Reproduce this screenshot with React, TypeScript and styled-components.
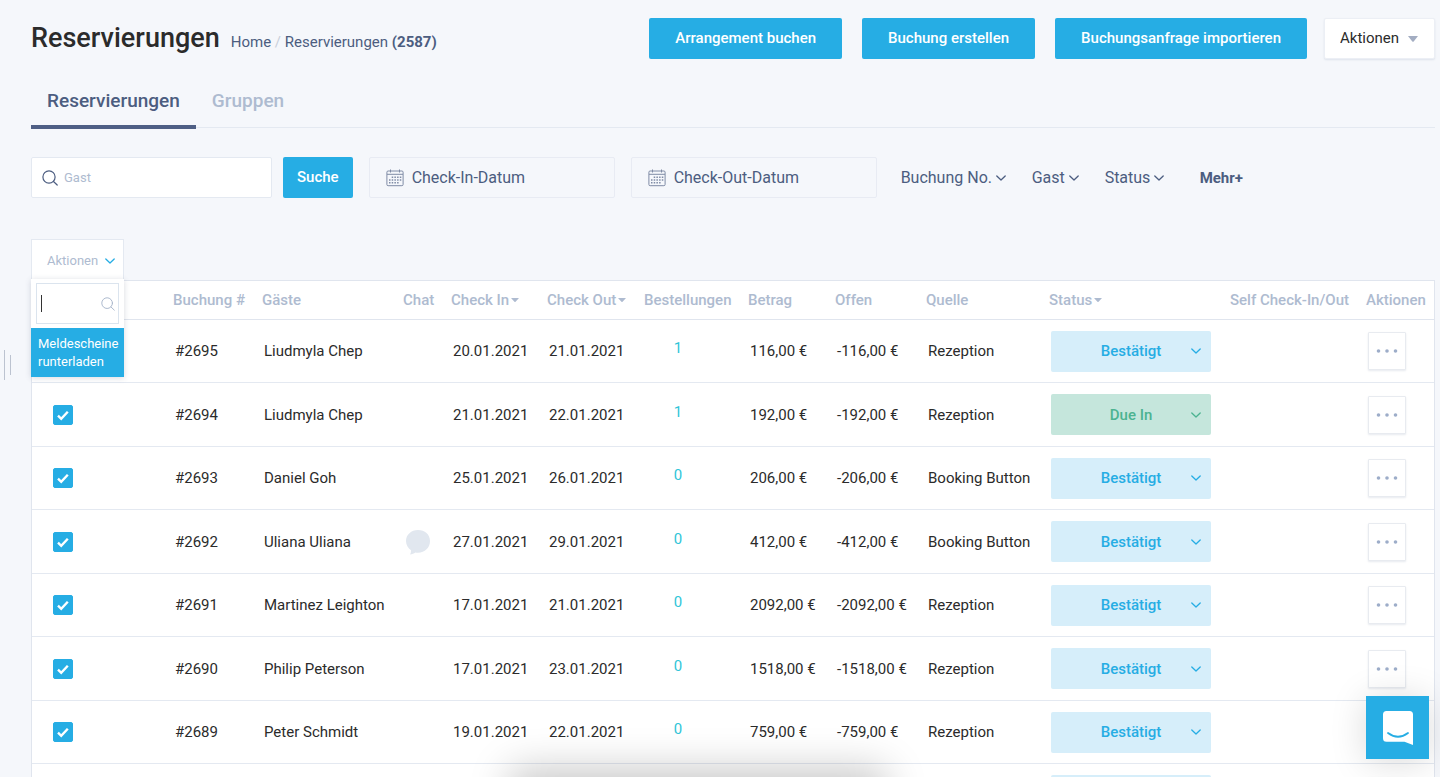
import React from 'react';
import styled, { createGlobalStyle, css } from 'styled-components';

const c = {
  bg: '#f5f7fb',
  blue: '#26ade4',
  navy: '#4c5d80',
  muted: '#aebbd0',
  line: '#e4e9f1',
  text: '#2b2b2b',
};

const GlobalStyle = createGlobalStyle`
  *, *::before, *::after { box-sizing: border-box; }
  body {
    margin: 0;
    background: ${c.bg};
    color: ${c.text};
    font-family: Roboto, "Liberation Sans", sans-serif;
    font-size: 15px;
    line-height: 20px;
  }
  button, input, select { font: inherit; color: inherit; letter-spacing: inherit; }
  svg { display: block; flex: none; }
`;

const Page = styled.div`
  height: 100vh;
  overflow: hidden;
  padding: 18px 5px 0 31px;
`;

const Header = styled.header`
  display: flex;
  align-items: flex-start;
  justify-content: space-between;
`;

const Heading = styled.div`
  display: flex;
  align-items: baseline;
  gap: 11px;
  padding-top: 2px;
`;

const Title = styled.h1`
  margin: 0;
  font-size: 27px;
  line-height: 36px;
  font-weight: 500;
`;

const Crumbs = styled.nav`
  color: ${c.navy};
  a { color: inherit; text-decoration: none; }
  span { color: #c9cfda; }
`;

const HeaderActions = styled.div`
  display: flex;
  gap: 20px;
`;

const PrimaryButton = styled.button<{ $pad?: number }>`
  height: 41px;
  padding: 0 ${(p) => p.$pad ?? 26}px 1px;
  border: 0;
  border-radius: 2px;
  background: ${c.blue};
  color: #fff;
  font-weight: 500;
  white-space: nowrap;
`;

const SelectWrap = styled.label`
  position: relative;
  display: inline-flex;
  align-items: center;
  svg {
    position: absolute;
    right: 0;
    pointer-events: none;
  }
`;

const BareSelect = styled.select`
  appearance: none;
  border: 0;
  margin: 0;
  padding: 0 13px 0 0;
  background: transparent;
  outline: none;
`;

const HeaderSelect = styled(SelectWrap)`
  margin-left: -3px;
  svg { right: 17px; color: #a3adc2; }
`;

const HeaderSelectField = styled(BareSelect)`
  height: 41px;
  width: 111px;
  padding: 0 16px 1px 15px;
  border: 1px solid #eceff5;
  border-radius: 2px;
  background: #fff;
  box-shadow: 0 1px 2px rgba(60, 80, 120, 0.12);
`;

const Tabs = styled.nav`
  display: flex;
  height: 51px;
  margin-top: 18px;
  border-bottom: 1px solid ${c.line};
`;

const Tab = styled.a<{ $active?: boolean }>`
  height: 52px;
  padding: 12px 16px 0;
  font-size: 19px;
  line-height: 24px;
  font-weight: 500;
  text-decoration: none;
  color: ${(p) => (p.$active ? c.navy : c.muted)};
  ${(p) => p.$active && css`border-bottom: 4px solid #4f5f85;`}
`;

const Filters = styled.form`
  display: flex;
  align-items: center;
  margin-top: 29px;
  color: ${c.navy};
  font-size: 16px;
`;

const SearchBox = styled.label`
  display: flex;
  align-items: center;
  gap: 6px;
  width: 241px;
  height: 41px;
  padding: 0 10px;
  border: 1px solid ${c.line};
  border-radius: 2px;
  background: #fff;
  input {
    flex: 1;
    min-width: 0;
    border: 0;
    padding: 0;
    outline: none;
    background: transparent;
    font-size: 13px;
  }
  input::placeholder { color: ${c.muted}; opacity: 1; }
`;

const SearchButton = styled(PrimaryButton)`
  margin-left: 11px;
  font-size: 15px;
`;

const DateBox = styled.label`
  display: flex;
  align-items: center;
  gap: 8px;
  width: 246px;
  height: 41px;
  margin-left: 16px;
  padding: 1px 16px 0;
  border: 1px solid #e8ebf3;
  border-radius: 2px;
  input {
    flex: 1;
    min-width: 0;
    border: 0;
    padding: 0;
    outline: none;
    background: transparent;
  }
  input::placeholder { color: ${c.navy}; opacity: 1; }
`;

const FilterMenus = styled.div`
  display: flex;
  gap: 26px;
  margin-left: 24px;
  height: 22px;
`;

const MoreButton = styled.button`
  margin-left: 10px;
  padding: 0;
  border: 0;
  background: transparent;
  font-size: 15px;
  font-weight: 700;
`;

const BulkActions = styled.div`
  position: relative;
  width: 93px;
  margin-top: 41px;
  font-size: 13px;
`;

const BulkTrigger = styled.button`
  display: flex;
  align-items: center;
  justify-content: space-between;
  width: 100%;
  height: 42px;
  padding: 1px 8px 0 15px;
  border: 1px solid ${c.line};
  border-bottom: 0;
  background: #fff;
  color: ${c.muted};
  svg { color: ${c.blue}; }
`;

const BulkMenu = styled.div`
  position: absolute;
  z-index: 2;
  top: 40px;
  left: 0;
  width: 100%;
  padding-top: 4px;
  background: #fff;
  box-shadow: 0 1px 6px rgba(60, 70, 100, 0.2);
`;

const MenuSearch = styled.label`
  position: relative;
  display: flex;
  align-items: center;
  height: 41px;
  margin: 0 5px 4px;
  padding: 0 3px 0 4px;
  border: 1px solid #dbe4ee;
  color: #a9b6cb;
  input {
    flex: 1;
    min-width: 0;
    border: 0;
    padding: 0;
    outline: none;
    background: transparent;
  }
`;

const TextCursor = styled.i`
  width: 1px;
  height: 17px;
  background: #333;
`;

const MenuOption = styled.button`
  display: block;
  width: 100%;
  height: 49px;
  padding: 0 0 0 7px;
  border: 0;
  background: ${c.blue};
  color: #fff;
  line-height: 18px;
  text-align: left;
`;

const TableFrame = styled.main`
  margin-top: -1px;
  border: 1px solid #e0e5ee;
  background: #fff;
`;

const Table = styled.table`
  width: 100%;
  table-layout: fixed;
  border-collapse: separate;
  border-spacing: 0;
  white-space: nowrap;
`;

const HeadCell = styled.th`
  height: 39px;
  padding: 0;
  border-bottom: 1px solid #e0e5ee;
  color: ${c.muted};
  font-weight: 500;
  text-align: left;
`;

const SortButton = styled.button`
  display: inline-flex;
  align-items: center;
  gap: 2px;
  padding: 0;
  border: 0;
  background: transparent;
  font-weight: 500;
`;

const Row = styled.tr`
  height: 63px;
  &:nth-child(even) { height: 64px; }
`;

const Cell = styled.td`
  padding: 0 0 0 2px;
  border-bottom: 1px solid ${c.line};
`;

const CheckLabel = styled.label`
  position: relative;
  display: block;
  width: 20px;
  height: 20px;
  margin-left: 19px;
  input {
    appearance: none;
    display: block;
    width: 20px;
    height: 20px;
    margin: 0;
    border: 1px solid #cfd8e6;
    border-radius: 2px;
  }
  input:checked {
    border-color: ${c.blue};
    background: ${c.blue};
  }
  svg {
    position: absolute;
    top: 0;
    left: 0;
    pointer-events: none;
  }
`;

const OrdersLink = styled.a`
  display: block;
  width: 64px;
  padding-bottom: 6px;
  color: #2fc5d8;
  text-align: center;
  text-decoration: none;
`;

const StatusWrap = styled(SelectWrap)<{ $green: boolean }>`
  display: flex;
  width: 160px;
  height: 41px;
  border-radius: 2px;
  background: ${(p) => (p.$green ? '#c5e6dc' : '#d6eefa')};
  color: ${(p) => (p.$green ? '#4cb391' : c.blue)};
  svg { right: 10px; }
`;

const StatusSelect = styled(BareSelect)`
  width: 100%;
  height: 41px;
  padding: 0;
  font-weight: 500;
  text-align: center;
  text-align-last: center;
`;

const MoreActions = styled.button`
  display: flex;
  align-items: center;
  justify-content: center;
  width: 38px;
  height: 38px;
  padding: 0;
  border: 1px solid #e8ebf0;
  border-radius: 1px;
  background: #fff;
  color: #9dadc9;
  box-shadow: 0 1px 2px rgba(60, 80, 120, 0.12);
`;

const PanelHandle = styled.div`
  position: fixed;
  top: 350px;
  left: 4px;
  display: flex;
  align-items: center;
  gap: 5px;
  i { width: 1px; height: 30px; background: #bcc3d0; }
  i + i { height: 20px; }
`;

const ChatLauncher = styled.button`
  position: fixed;
  right: 11px;
  bottom: 18px;
  display: flex;
  align-items: center;
  justify-content: center;
  width: 63px;
  height: 63px;
  padding: 0;
  border: 0;
  background: ${c.blue};
  box-shadow: 0 3px 36px rgba(0, 0, 0, 0.15);
`;

const BottomShade = styled.div`
  position: fixed;
  top: 100%;
  left: 36%;
  width: 25%;
  height: 60px;
  box-shadow: 0 0 40px 8px rgba(0, 0, 0, 0.22);
  pointer-events: none;
`;

const Chevron = ({ size = 10 }: { size?: number }) => (
  <svg width={size} height={size} viewBox="0 0 10 10" fill="none" stroke="currentColor" strokeWidth="1.3" strokeLinecap="round" strokeLinejoin="round">
    <path d="M0.8 3 5 7l4.2-4" />
  </svg>
);

const Caret = ({ w, h }: { w: number; h: number }) => (
  <svg width={w} height={h} viewBox="0 0 10 6" preserveAspectRatio="none" fill="currentColor">
    <path d="M0 0h10L5.700 5.500q-.7.700-1.400 0z" />
  </svg>
);

const Magnifier = ({ size, stroke }: { size: number; stroke: number }) => (
  <svg width={size} height={size} viewBox="0 0 16 16" fill="none" stroke="currentColor" strokeWidth={stroke} strokeLinecap="round">
    <circle cx="7" cy="7" r="6.100" />
    <path d="m11.500 11.500 3.700 3.500" />
  </svg>
);

const Calendar = () => (
  <svg width="18" height="18" viewBox="0 0 18 18" fill="none" stroke="#7f8ba5" strokeWidth="1">
    <rect x=".9" y="2" width="16.200" height="14.700" rx="1.200" />
    <path d="M1 5.300h16M4.500.500v3M13.500.500v3" />
    <path strokeWidth="1.500" strokeDasharray="1.500 1.200" d="M5.700 8.200h9.600M3 11h12.300M3 13.800h9.600" />
  </svg>
);

const Bubble = () => (
  <svg width="26" height="26" viewBox="0 0 26 26" fill="#e1e7ef">
    <path d="M13 1C6.200 1 1 5.700 1 12c0 4 2 7.200 5 9.200.1 1.500-.2 3-.9 4.300 2-.2 3.800-1 5.300-2 .9.200 1.700.2 2.600.2 6.800 0 12-5 12-11.700S19.800 1 13 1z" />
  </svg>
);

const Tick = () => (
  <svg width="20" height="20" viewBox="0 0 20 20" fill="none" stroke="#fff" strokeWidth="2.400">
    <path d="m5 10.700 3.200 3.100L14.800 6.800" />
  </svg>
);

const Dots = () => (
  <svg width="22" height="4" viewBox="0 0 22 4" fill="currentColor">
    <circle cx="2.500" cy="2" r="1.800" />
    <circle cx="11" cy="2" r="1.800" />
    <circle cx="19.500" cy="2" r="1.800" />
  </svg>
);

const LauncherIcon = () => (
  <svg width="30" height="34" viewBox="0 0 30 34">
    <path fill="#fff" d="M3.500 0h23A3.500 3.500 0 0 1 30 3.500V34l-8.500-3.300h-18A3.500 3.500 0 0 1 0 27.200V3.500A3.500 3.500 0 0 1 3.500 0z" />
    <path fill="none" stroke={c.blue} strokeWidth="1.800" strokeLinecap="round" d="M5 22q10 7.500 20 0" />
  </svg>
);

type Booking = {
  id: string;
  guest: string;
  chat?: boolean;
  from: string;
  to: string;
  orders: string;
  total: string;
  open: string;
  source: string;
  status: string;
};

const bookings: Booking[] = [
  { id: '#2695', guest: 'Liudmyla Chep', from: '20.01.2021', to: '21.01.2021', orders: '1', total: '116,00 €', open: '-116,00 €', source: 'Rezeption', status: 'Bestätigt' },
  { id: '#2694', guest: 'Liudmyla Chep', from: '21.01.2021', to: '22.01.2021', orders: '1', total: '192,00 €', open: '-192,00 €', source: 'Rezeption', status: 'Due In' },
  { id: '#2693', guest: 'Daniel Goh', from: '25.01.2021', to: '26.01.2021', orders: '0', total: '206,00 €', open: '-206,00 €', source: 'Booking Button', status: 'Bestätigt' },
  { id: '#2692', guest: 'Uliana Uliana', chat: true, from: '27.01.2021', to: '29.01.2021', orders: '0', total: '412,00 €', open: '-412,00 €', source: 'Booking Button', status: 'Bestätigt' },
  { id: '#2691', guest: 'Martinez Leighton', from: '17.01.2021', to: '21.01.2021', orders: '0', total: '2092,00 €', open: '-2092,00 €', source: 'Rezeption', status: 'Bestätigt' },
  { id: '#2690', guest: 'Philip Peterson', from: '17.01.2021', to: '23.01.2021', orders: '0', total: '1518,00 €', open: '-1518,00 €', source: 'Rezeption', status: 'Bestätigt' },
  { id: '#2689', guest: 'Peter Schmidt', from: '19.01.2021', to: '22.01.2021', orders: '0', total: '759,00 €', open: '-759,00 €', source: 'Rezeption', status: 'Bestätigt' },
  { id: '', guest: '', from: '', to: '', orders: '', total: '', open: '', source: '', status: 'Bestätigt' },
];

const columns: { label: string; width: number; sortable?: boolean }[] = [
  { label: '', width: 141 },
  { label: 'Buchung #', width: 89 },
  { label: 'Gäste', width: 141 },
  { label: 'Chat', width: 48 },
  { label: 'Check In', width: 96, sortable: true },
  { label: 'Check Out', width: 97, sortable: true },
  { label: 'Bestellungen', width: 104 },
  { label: 'Betrag', width: 87 },
  { label: 'Offen', width: 91 },
  { label: 'Quelle', width: 123 },
  { label: 'Status', width: 181, sortable: true },
  { label: 'Self Check-In/Out', width: 136 },
  { label: 'Aktionen', width: 68 },
];

const FilterSelect = ({ label }: { label: string }) => (
  <SelectWrap>
    <BareSelect aria-label={label}>
      <option>{label}</option>
    </BareSelect>
    <Chevron />
  </SelectWrap>
);

const BookingRow = ({ b }: { b: Booking }) => (
  <Row>
    <Cell>
      <CheckLabel>
        <input type="checkbox" defaultChecked aria-label={b.id} />
        <Tick />
      </CheckLabel>
    </Cell>
    <Cell>{b.id}</Cell>
    <Cell>{b.guest}</Cell>
    <Cell>{b.chat && <Bubble />}</Cell>
    <Cell>{b.from}</Cell>
    <Cell>{b.to}</Cell>
    <Cell><OrdersLink href="#">{b.orders}</OrdersLink></Cell>
    <Cell>{b.total}</Cell>
    <Cell>{b.open}</Cell>
    <Cell>{b.source}</Cell>
    <Cell>
      <StatusWrap $green={b.status === 'Due In'}>
        <StatusSelect aria-label="Status">
          <option>{b.status}</option>
        </StatusSelect>
        <Chevron />
      </StatusWrap>
    </Cell>
    <Cell />
    <Cell>
      <MoreActions type="button" aria-label="Aktionen"><Dots /></MoreActions>
    </Cell>
  </Row>
);

export default function App() {
  return (
    <>
      <GlobalStyle />
      <Page>
        <Header>
          <Heading>
            <Title>Reservierungen</Title>
            <Crumbs>
              <a href="#">Home</a> <span>/</span> <a href="#">Reservierungen</a> <b>(2587)</b>
            </Crumbs>
          </Heading>
          <HeaderActions>
            <PrimaryButton type="button">Arrangement buchen</PrimaryButton>
            <PrimaryButton type="button">Buchung erstellen</PrimaryButton>
            <PrimaryButton type="button">Buchungsanfrage importieren</PrimaryButton>
            <HeaderSelect>
              <HeaderSelectField aria-label="Aktionen">
                <option>Aktionen</option>
              </HeaderSelectField>
              <Caret w={10} h={6} />
            </HeaderSelect>
          </HeaderActions>
        </Header>

        <Tabs>
          <Tab href="#" $active>Reservierungen</Tab>
          <Tab href="#">Gruppen</Tab>
        </Tabs>

        <Filters>
          <SearchBox>
            <Magnifier size={16} stroke={1.2} />
            <input type="text" placeholder="Gast" />
          </SearchBox>
          <SearchButton type="button" $pad={14}>Suche</SearchButton>
          <DateBox>
            <Calendar />
            <input type="text" placeholder="Check-In-Datum" />
          </DateBox>
          <DateBox>
            <Calendar />
            <input type="text" placeholder="Check-Out-Datum" />
          </DateBox>
          <FilterMenus>
            <FilterSelect label="Buchung No." />
            <FilterSelect label="Gast" />
            <FilterSelect label="Status" />
            <MoreButton type="button">Mehr+</MoreButton>
          </FilterMenus>
        </Filters>

        <BulkActions>
          <BulkTrigger type="button" aria-expanded="true">
            Aktionen
            <Chevron />
          </BulkTrigger>
          <BulkMenu>
            <MenuSearch>
              <TextCursor />
              <input type="text" aria-label="Aktionen" />
              <Magnifier size={14} stroke={1.1} />
            </MenuSearch>
            <MenuOption type="button">Meldescheine runterladen</MenuOption>
          </BulkMenu>
        </BulkActions>

        <TableFrame>
          <Table>
            <colgroup>
              {columns.map((col, i) => <col key={i} width={col.width} />)}
            </colgroup>
            <thead>
              <tr>
                {columns.map((col, i) => (
                  <HeadCell key={i} scope="col">
                    {col.sortable ? (
                      <SortButton type="button">{col.label}<Caret w={8} h={4} /></SortButton>
                    ) : col.label}
                  </HeadCell>
                ))}
              </tr>
            </thead>
            <tbody>
              {bookings.map((b, i) => <BookingRow key={i} b={b} />)}
            </tbody>
          </Table>
        </TableFrame>
      </Page>

      <PanelHandle><i /><i /></PanelHandle>
      <BottomShade />
      <ChatLauncher type="button" aria-label="Chat"><LauncherIcon /></ChatLauncher>
    </>
  );
}
